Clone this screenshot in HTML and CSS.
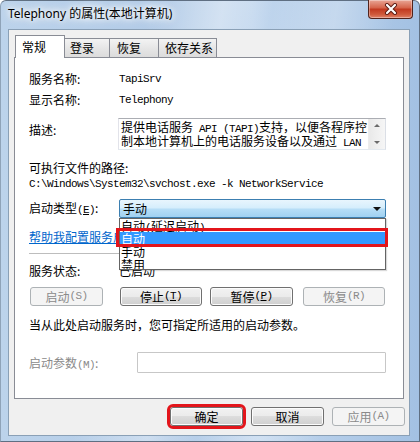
FILE: index.html
```html
<!DOCTYPE html>
<html lang="zh-CN">
<head>
<meta charset="utf-8">
<title>Telephony 的属性(本地计算机)</title>
<link rel="stylesheet" href="styles.css">
</head>
<body>
<div class="window">
  <div class="titlebar">
    <span class="title">Telephony 的属性(本地计算机)</span>
    <div class="close">
      <svg width="14" height="12" viewBox="0 0 14 12">
        <path d="M3 2 L11 10 M11 2 L3 10" stroke="#5a1a12" stroke-width="4" stroke-linecap="round"/>
        <path d="M3 2 L11 10 M11 2 L3 10" stroke="#fff" stroke-width="2.2" stroke-linecap="round"/>
      </svg>
    </div>
  </div>
  <div class="client">
    <div class="tabs">
      <div class="tab sel">常规</div>
      <div class="tab w45">登录</div>
      <div class="tab w49">恢复</div>
      <div class="tab w58">依存关系</div>
    </div>
    <div class="panel">
      <div class="row"><span class="lbl">服务名称:</span><span class="mono">TapiSrv</span></div>
      <div class="row r2"><span class="lbl">显示名称:</span><span class="mono">Telephony</span></div>
      <div class="desc-row">
        <span class="lbl dl">描述:</span>
        <div class="desc-box">
          <div class="desc-text">提供电话服务<span class="mono"> API (TAPI)</span>支持，以便各程序控<br>制本地计算机上的电话服务设备以及通过<span class="mono"> LAN</span></div>
          <div class="sb"><span class="up"></span><span class="down"></span></div>
        </div>
      </div>
      <div class="row path-lbl">可执行文件的路径:</div>
      <div class="row path mono">C:\Windows\System32\svchost.exe -k NetworkService</div>
      <div class="row type-row">
        <span class="lbl">启动类型<span class="mono">(<u>E</u>)</span>:</span>
        <div class="combo"><span>手动</span><span class="arrow"></span></div>
      </div>
      <div class="row link-row"><span class="link">帮助我配置服务启动选项。</span></div>
      <div class="sep"></div>
      <div class="row status-row"><span class="lbl">服务状态:</span><span>已启动</span></div>
      <div class="btn-row">
        <div class="btn dis b1">启动<span class="mono">(S)</span></div>
        <div class="btn b2">停止<span class="mono">(<u>T</u>)</span></div>
        <div class="btn b3">暂停<span class="mono">(<u>P</u>)</span></div>
        <div class="btn dis b4">恢复<span class="mono">(R)</span></div>
      </div>
      <div class="row hint">当从此处启动服务时，您可指定所适用的启动参数。</div>
      <div class="param-row">
        <span class="lbl pl">启动参数<span class="mono">(M)</span>:</span>
        <div class="param-input"></div>
      </div>
      <div class="droplist">
        <div class="item">自动<span class="mono">(</span>延迟启动<span class="mono">)</span></div>
        <div class="item hi">自动</div>
        <div class="item">手动</div>
        <div class="item last">禁用</div>
      </div>
    </div>
    <div class="footer">
      <div class="btn fb ok">确定</div>
      <div class="btn fb">取消</div>
      <div class="btn fb dis">应用<span class="mono">(A)</span></div>
    </div>
  </div>
</div>
</body>
</html>
```
FILE: styles.css
```css
* { box-sizing: border-box; }
html, body { margin: 0; padding: 0; }
body {
  width: 420px;
  height: 442px;
  overflow: hidden;
  font-family: "Noto Sans CJK SC", "Noto Sans", sans-serif;
  font-size: 12px;
  color: #000;
  background: #fff;
}
.mono {
  font-family: "Liberation Mono", "DejaVu Sans Mono", monospace;
  font-size: 11px;
  letter-spacing: -0.6px;
}
.window {
  width: 420px;
  height: 442px;
  border: 1px solid #5f6f82;
  border-left-color: #8fa3b8;
  border-radius: 6px 6px 0 0;
  background:
    linear-gradient(100deg, rgba(255,255,255,0) 30%, rgba(255,255,255,0.35) 45%, rgba(255,255,255,0) 55%, rgba(255,255,255,0.25) 68%, rgba(255,255,255,0) 80%),
    linear-gradient(to right, #bcd3eb, #b2cbe7 40%, #c2d7ee 60%, #a3c1e3);
  display: flex;
  flex-direction: column;
}
.titlebar {
  height: 28px;
  flex: none;
  display: flex;
  align-items: flex-start;
  justify-content: space-between;
  padding-left: 7px;
}
.title {
  font-family: "Noto Sans", "Noto Sans CJK SC", sans-serif;
  font-size: 12px;
  line-height: 26px;
  text-shadow: 0 0 5px #fff, 0 0 9px #fff, 0 0 12px #fff;
}
.close {
  width: 45px;
  height: 19px;
  margin-top: -1px;
  margin-right: 6px;
  border: 1px solid #51231c;
  border-top: none;
  border-radius: 0 0 4px 4px;
  background: linear-gradient(#e9a696, #d6664d 42%, #c23a21 52%, #cf5a3c 80%, #e0836a);
  box-shadow: inset 0 0 0 1px rgba(255,255,255,0.35);
  display: flex;
  align-items: center;
  justify-content: center;
}
.client {
  margin: 0 9px 0 7px;
  height: 407px;
  flex: none;
  background: #f0f0f0;
  border: 1px solid #8aa0b6;
}
.tabs {
  display: flex;
  align-items: flex-end;
  height: 22px;
  margin: 5px 0 0 6px;
  position: relative;
  z-index: 2;
}
.tab {
  height: 19px;
  border: 1px solid #898c95;
  border-bottom: none;
  border-left: none;
  background: linear-gradient(#f3f3f3, #e6e6e6 50%, #dcdcdc);
  padding-left: 6px;
  line-height: 17px;
  white-space: nowrap;
}
.tab.sel {
  width: 50px;
  height: 23px;
  margin-bottom: -1px;
  background: #fff;
  border-left: 1px solid #898c95;
  line-height: 21px;
  padding-left: 6px;
}
.tab.w45 { width: 45px; padding-left: 5px; }
.tab.w49 { width: 49px; padding-left: 7px; }
.tab.w58 { width: 58px; padding-left: 6px; }
.panel {
  position: relative;
  margin-left: 5px;
  width: 390px;
  height: 342px;
  border: 1px solid #898c95;
  background: #fff;
  padding: 14px 16px 0 14px;
}
.row {
  display: flex;
  align-items: center;
  height: 14px;
  line-height: 14px;
  white-space: nowrap;
}
.lbl { width: 90px; flex: none; }
.r2 { margin-top: 7px; }
.desc-row {
  display: flex;
  margin-top: 11px;
  height: 32px;
}
.dl { width: 89px; padding-top: 5px; line-height: 14px; }
.desc-box {
  width: 268px;
  height: 32px;
  border: 1px solid #abadb3;
  border-right-color: #dbdfe6;
  border-bottom-color: #e3e9ef;
  border-left-color: #e2e3ea;
  display: flex;
  background: #fff;
}
.desc-text {
  flex: 1;
  min-width: 0;
  padding: 2px 0 0 2px;
  line-height: 12px;
  white-space: nowrap;
  overflow: hidden;
}
.sb {
  width: 17px;
  flex: none;
  background: linear-gradient(to right, #e9e9e9, #f6f6f6);
  border-left: 1px solid #ececec;
  display: flex;
  flex-direction: column;
  justify-content: space-between;
  align-items: center;
  padding: 5px 0 5px;
}
.up, .down { width: 0; height: 0; border-left: 3px solid transparent; border-right: 3px solid transparent; }
.up { border-bottom: 3px solid #6a6a6a; }
.down { border-top: 3px solid #6a6a6a; }
.path-lbl { margin-top: 11px; }
.path { margin-top: 2px; }
.type-row { margin-top: 8px; height: 19px; }
.combo {
  width: 267px;
  height: 19px;
  border: 1px solid #3c7fb1;
  border-radius: 2px;
  background: linear-gradient(#e8f5fd, #d6eefc 45%, #b6ddf6 55%, #a0d1f1);
  display: flex;
  align-items: center;
  justify-content: space-between;
  padding: 0 4px 0 3px;
  line-height: 17px;
}
.arrow {
  width: 0; height: 0;
  border-left: 4px solid transparent;
  border-right: 4px solid transparent;
  border-top: 4px solid #111;
  margin-top: 1px;
}
.link-row { margin-top: 12px; }
.link { color: #0066cc; text-decoration: underline; }
.sep {
  margin-top: 9px;
  width: 357px;
  height: 1px;
  background: #bdbdbd;
}
.status-row { margin-top: 10px; }
.btn-row {
  display: flex;
  margin-top: 9px;
  height: 19px;
}
.btn {
  height: 19px;
  border: 1px solid #707070;
  border-radius: 3px;
  background: linear-gradient(#f2f2f2, #ebebeb 50%, #dddddd 50%, #cfcfcf);
  box-shadow: inset 0 0 0 1px #fcfcfc;
  display: flex;
  align-items: center;
  justify-content: center;
  line-height: 17px;
  white-space: nowrap;
}
.btn.dis {
  border-color: #adb2b5;
  background: #f4f4f4;
  color: #8a8a8a;
  box-shadow: none;
}
.b1 { width: 73px; margin-left: 1px; }
.b2 { width: 82px; margin-left: 17px; }
.b3 { width: 83px; margin-left: 8px; }
.b4 { width: 82px; margin-left: 10px; }
.hint { margin-top: 12px; }
.param-row {
  display: flex;
  align-items: center;
  margin-top: 20px;
  height: 21px;
}
.pl { width: 108px; color: #8a8a8a; }
.param-input {
  width: 249px;
  height: 21px;
  border: 1px solid #c7c7c7;
  border-radius: 1px;
  background: #fff;
}
.droplist {
  position: absolute;
  left: 104px;
  top: 160px;
  width: 267px;
  height: 52px;
  border: 1px solid #646464;
  background: #fff;
  box-shadow: 1px 1px 1px rgba(0,0,0,0.15);
  z-index: 3;
}
.item {
  height: 13px;
  line-height: 13px;
  padding-left: 1px;
  white-space: nowrap;
}
.item.last { height: 11px; overflow: hidden; }
.item.hi {
  position: relative;
  background: #3399ff;
  color: #fff;
}
.item.hi::after {
  content: "";
  position: absolute;
  left: -4px;
  right: -3px;
  top: -4px;
  bottom: -2px;
  border: 3px solid #e3151b;
}
.footer {
  display: flex;
  justify-content: flex-end;
  gap: 8px;
  margin-top: 8px;
  padding-right: 4px;
}
.fb { width: 73px; }
.ok {
  outline: 3px solid #e3151b;
  outline-offset: 0;
}
```
